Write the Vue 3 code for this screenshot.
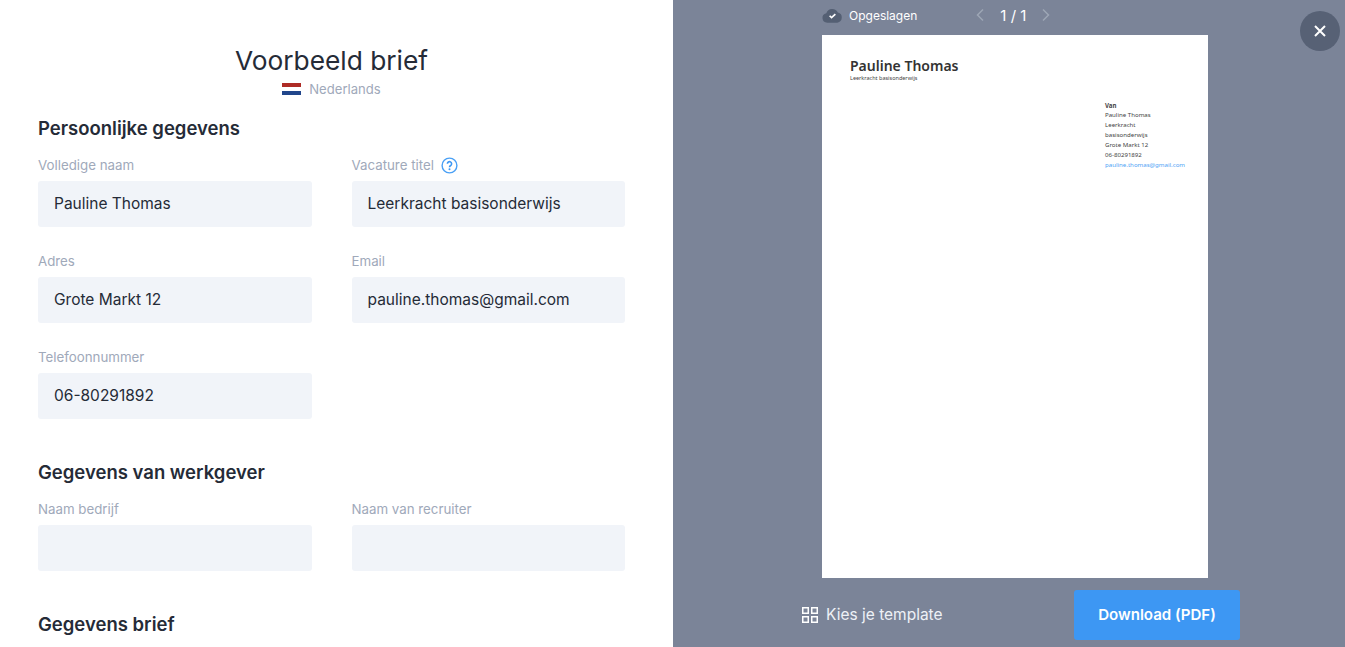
<script setup>
const personal = [
  { label: 'Volledige naam', value: 'Pauline Thomas' },
  { label: 'Vacature titel', value: 'Leerkracht basisonderwijs', help: true },
  { label: 'Adres', value: 'Grote Markt 12' },
  { label: 'Email', value: 'pauline.thomas@gmail.com' },
  { label: 'Telefoonnummer', value: '06-80291892' },
]
const employer = [
  { label: 'Naam bedrijf', value: '' },
  { label: 'Naam van recruiter', value: '' },
]
</script>

<template>
  <div class="page">
    <main class="editor">
      <header class="head">
        <h1>Voorbeeld brief</h1>
        <div class="lang">
          <svg width="19" height="12" viewBox="0 0 19 12"><rect width="19" height="4" fill="#ae2b25"/><rect y="4" width="19" height="4" fill="#fff"/><rect y="8" width="19" height="4" fill="#21468b"/></svg>
          <span>Nederlands</span>
        </div>
      </header>

      <section class="group first">
        <h2>Persoonlijke gegevens</h2>
        <div class="grid">
          <div v-for="f in personal" :key="f.label" class="field">
            <div class="label">
              {{ f.label }}
              <svg v-if="f.help" class="help" width="17" height="17" viewBox="0 0 17 17"><circle cx="8.5" cy="8.5" r="7.4" fill="none" stroke="#4aa0f5" stroke-width="1.4"/><path d="M6.4 6.800a2.100 2.100 0 1 1 3.300 1.700c-.8.5-1.200.9-1.200 1.700" fill="none" stroke="#3d97f3" stroke-width="1.600"/><circle cx="8.500" cy="12.300" r="1" fill="#3d97f3"/></svg>
            </div>
            <div class="input">{{ f.value }}</div>
          </div>
        </div>
      </section>

      <section class="group second">
        <h2>Gegevens van werkgever</h2>
        <div class="grid">
          <div v-for="f in employer" :key="f.label" class="field">
            <div class="label">{{ f.label }}</div>
            <div class="input"></div>
          </div>
        </div>
      </section>

      <section class="group third">
        <h2>Gegevens brief</h2>
      </section>
    </main>

    <aside class="preview">
      <div class="topbar">
        <div class="saved">
          <svg width="21" height="15" viewBox="0 0 22 15"><path d="M5.5 15a5 5 0 0 1-1-9.900A6.500 6.500 0 0 1 16.600 4.400a5.400 5.400 0 0 1-.6 10.600z" fill="#545f73"/><path d="M8 7.800l2 2 4-3.800" fill="none" stroke="#fff" stroke-width="1.700"/></svg>
          <span>Opgeslagen</span>
        </div>
        <div class="pager">
          <svg width="10" height="14" viewBox="0 0 10 14"><path d="M8 1.500L2.500 7 8 12.500" fill="none" stroke="#9da6b5" stroke-width="1.500"/></svg>
          <span>1 / 1</span>
          <svg width="10" height="14" viewBox="0 0 10 14"><path d="M2 1.500L7.500 7 2 12.500" fill="none" stroke="#9da6b5" stroke-width="1.500"/></svg>
        </div>
      </div>

      <div class="sheet">
        <div class="doc-name">Pauline Thomas</div>
        <div class="doc-role">Leerkracht basisonderwijs</div>
        <div class="doc-from">
          <b>Van</b>
          <span>Pauline Thomas</span>
          <span>Leerkracht</span>
          <span>basisonderwijs</span>
          <span>Grote Markt 12</span>
          <span>06-80291892</span>
          <span class="mail">pauline.thomas@gmail.com</span>
        </div>
      </div>

      <div class="actions">
        <button class="template">
          <svg width="16" height="16" viewBox="0 0 16 16" fill="none" stroke="#fff" stroke-width="1.500"><rect x=".75" y=".75" width="5.500" height="5.500"/><rect x="9.750" y=".75" width="5.500" height="5.500"/><rect x=".75" y="9.750" width="5.500" height="5.500"/><rect x="9.750" y="9.750" width="5.500" height="5.500"/></svg>
          <span class="tpl-text">Kies je template</span>
        </button>
        <button class="download">Download (PDF)</button>
      </div>

      <button class="close" aria-label="Sluiten">
        <svg width="12" height="12" viewBox="0 0 12 12"><path d="M1 1l10 10M11 1L1 11" stroke="#fff" stroke-width="2"/></svg>
      </button>
    </aside>
  </div>
</template>

<style>
html, body { margin: 0; overflow: hidden; }
</style>

<style scoped>
.page { display: flex; width: 1345px; height: 647px; overflow: hidden; font-family: Inter, "Liberation Sans", sans-serif; color: #252b37; background: #fff; }
.editor { width: 673px; box-sizing: border-box; padding: 0 48px 0 38px; flex: none; }
.head { padding-top: 43px; text-align: center; }
h1 { margin: 0; font-size: 26.300px; line-height: 36px; font-weight: 400; }
.lang { display: flex; justify-content: center; align-items: center; gap: 8px; height: 20px; color: #a0a9ba; font-size: 13.100px; }
h2 { margin: 0; font-size: 18.500px; line-height: 24px; font-weight: 600; }
.first { margin-top: 17px; }
.second { margin-top: 41px; }
.third { margin-top: 41px; }
.grid { display: grid; grid-template-columns: 1fr 1fr; column-gap: 40px; row-gap: 25px; margin-top: 16px; }
.label { display: flex; align-items: center; gap: 7px; height: 18px; margin-bottom: 7px; font-size: 13.300px; color: #a0a9ba; }
.input { height: 46px; box-sizing: border-box; padding: 0 16px 2px; display: flex; align-items: center; background: #f1f4f9; border-radius: 3px; font-size: 15.500px; }
.preview { position: relative; flex: 1; box-sizing: border-box; padding-left: 12px; background: #7b8498; display: flex; flex-direction: column; align-items: center; }
.topbar { width: 386px; height: 30px; margin-bottom: 5px; flex: none; display: flex; align-items: center; color: #fff; }
.saved { display: flex; align-items: center; gap: 6px; font-size: 12px; }
.pager { display: flex; align-items: center; gap: 15px; margin-left: 58px; font-size: 15px; }
.sheet { position: relative; box-sizing: border-box; width: 386px; height: 543px; flex: none; background: #fff; padding: 22px 28px; font-family: "Noto Sans", sans-serif; color: #333; }
.doc-name { font-size: 14px; line-height: 18px; font-weight: 600; }
.doc-role { font-size: 5.500px; line-height: 6px; color: #444; }
.doc-from { position: absolute; left: 283px; top: 65.500px; display: flex; flex-direction: column; font-size: 6.100px; line-height: 9.900px; color: #444; }
.mail { color: #4fa3f5; }
.actions { width: 438px; margin-left: 12px; display: flex; justify-content: space-between; align-items: center; margin-top: 12px; }
button { border: 0; font: inherit; color: #fff; background: none; padding: 0; }
.template { display: flex; align-items: center; gap: 8px; font-size: 15.500px; color: #eef1f6; }
.tpl-text { padding-bottom: 2px; }
.download { width: 166px; height: 50px; padding-bottom: 2px; background: #3d97f3; border-radius: 3px; font-size: 15.100px; font-weight: 600; }
.close { position: absolute; top: 11px; right: 5px; width: 40px; height: 40px; border-radius: 50%; background: #576175; display: flex; align-items: center; justify-content: center; }
</style>
